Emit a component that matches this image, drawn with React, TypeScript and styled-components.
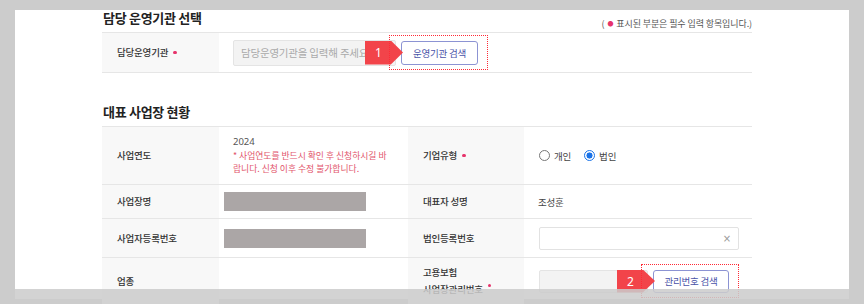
import styled, { createGlobalStyle } from "styled-components";

const GlobalStyle = createGlobalStyle`
  html, body {
    margin: 0;
    background: #cccccc;
    overflow: hidden;
  }
  body {
    font-family: "Noto Sans CJK KR", "Noto Sans", sans-serif;
    color: #333;
  }
`;

const Page = styled.div`
  position: relative;
  height: 304px;
  padding: 15px 15px 0;
  box-sizing: border-box;
  overflow: hidden;
`;

const Panel = styled.div`
  background: #ffffff;
  height: 100%;
  padding: 0 97px 0 87px;
`;

// the translucent strip over the bottom edge of the capture
const Shade = styled.div`
  position: absolute;
  left: 0;
  right: 0;
  bottom: 0;
  height: 15px;
  background: rgba(204, 204, 204, 0.86);
`;

const Header = styled.div`
  margin-top: -5px;
  height: 22px;
  display: flex;
  justify-content: space-between;
  align-items: flex-end;
`;

const Title = styled.h2<{ $top?: number }>`
  margin: ${(p) => p.$top ?? 0}px 0 6px 1px;
  font-size: 13px;
  line-height: 16px;
  font-weight: 700;
  letter-spacing: -0.3px;
  color: #222;
`;

const Notice = styled.p`
  margin: 0 0 2px;
  font-size: 9px;
  line-height: 12px;
  color: #555;
  letter-spacing: -0.1px;

  & > span {
    color: #e6336b;
    font-size: 6px;
    margin: 0 3px;
    vertical-align: 1px;
  }
`;

const Table = styled.div`
  border-top: 1px solid #e6e6e6;
`;

const Row = styled.div<{ $cols: string; $h: number }>`
  display: grid;
  grid-template-columns: ${(p) => p.$cols};
  height: ${(p) => p.$h}px;
  border-bottom: 1px solid #e6e6e6;
`;

const Label = styled.div`
  background: #f8f8f8;
  padding-left: 15px;
  display: flex;
  align-items: center;
  font-size: 9.5px;
  line-height: 17px;
  font-weight: 500;
  letter-spacing: -0.2px;
  color: #333;
`;

const Value = styled.div<{ $pad?: number }>`
  padding: 0 14px 0 ${(p) => p.$pad ?? 14}px;
  display: flex;
  align-items: center;
  font-size: 9.5px;
  color: #444;
  letter-spacing: -0.2px;
`;

const Required = styled.span`
  display: inline-block;
  width: 3.5px;
  height: 3.5px;
  border-radius: 50%;
  background: #e6336b;
  margin-left: 5px;
  vertical-align: 6px;
`;

const InputGroup = styled.div`
  display: flex;
  align-items: center;
  gap: 5px;
`;

const TextInput = styled.div<{ $w: number; $h: number }>`
  width: ${(p) => p.$w}px;
  height: ${(p) => p.$h}px;
  box-sizing: border-box;
  background: #f3f3f3;
  border: 1px solid #e4e4e4;
  border-radius: 2px;
  padding: 0 7px;
  display: flex;
  align-items: center;
  font-size: 10.5px;
  color: #aaa;
  white-space: nowrap;
  overflow: hidden;
`;

const ClearField = styled.div`
  width: 200px;
  height: 23px;
  box-sizing: border-box;
  background: #fff;
  border: 1px solid #e2e2e2;
  border-radius: 2px;
  padding: 0 7px;
  display: flex;
  align-items: center;
  justify-content: flex-end;
  color: #999;
  font-size: 10px;
  font-family: "DejaVu Sans", sans-serif;
`;

const Annotated = styled.div`
  position: relative;

  &::after {
    content: "";
    position: absolute;
    top: -6px;
    left: -12px;
    right: -10px;
    bottom: -5px;
    border: 1px dotted #ff2a36;
    pointer-events: none;
  }
`;

const Marker = styled.span`
  position: absolute;
  right: 100%;
  top: 0;
  bottom: 0;
  width: 38px;
  margin-right: -2px;
  background: #f2444a;
  clip-path: polygon(0 0, 68% 0, 100% 50%, 68% 100%, 0 100%);
  color: #fff;
  font-family: "Noto Sans", sans-serif;
  font-size: 12px;
  display: flex;
  align-items: center;
  padding-left: 10px;
  box-sizing: border-box;
`;

const SearchButton = styled.button<{ $w: number; $h: number }>`
  width: ${(p) => p.$w}px;
  height: ${(p) => p.$h}px;
  background: #fff;
  border: 1px solid #8c93d3;
  border-radius: 3px;
  color: #4a53a8;
  font-family: "Noto Sans CJK KR", sans-serif;
  font-size: 9.5px;
  letter-spacing: -0.2px;
  padding: 0;
`;

const YearBlock = styled.div`
  display: flex;
  flex-direction: column;
  line-height: 13.5px;

  & > b {
    font-weight: 400;
    font-family: "Noto Sans", sans-serif;
    font-size: 9.5px;
    color: #555;
    letter-spacing: 0;
  }
  & > span {
    font-size: 8.8px;
    color: #e2566c;
    letter-spacing: 0;
  }
`;

const RadioGroup = styled.div`
  display: flex;
  align-items: center;
  gap: 13px;
`;

const RadioItem = styled.label`
  display: flex;
  align-items: center;
  gap: 4px;
  font-size: 9.5px;
  color: #444;
`;

const RadioMark = styled.span<{ $on?: boolean }>`
  width: 11px;
  height: 11px;
  box-sizing: border-box;
  border-radius: 50%;
  border: 1px solid ${(p) => (p.$on ? "#1a73e8" : "#777")};
  background: ${(p) => (p.$on ? "radial-gradient(circle, #1a73e8 0 2.8px, #fff 3.3px)" : "#fff")};
`;

const Redacted = styled.div`
  width: 142px;
  height: 19px;
  margin-left: -9px;
  background: #aba6a6;
`;

const Lines = styled.div`
  display: flex;
  flex-direction: column;
`;

const COLS = "117px 189px 116px 1fr";

export default function App() {
  return (
    <Page>
      <GlobalStyle />
      <Panel>
        <Header>
          <Title>담당 운영기관 선택</Title>
          <Notice>
            (<span>●</span>표시된 부분은 필수 입력 항목입니다.)
          </Notice>
        </Header>
        <Table>
          <Row $cols="117px 1fr" $h={39}>
            <Label>
              담당운영기관<Required />
            </Label>
            <Value>
              <InputGroup>
                <TextInput $w={163} $h={26}>
                  담당운영기관을 입력해 주세요
                </TextInput>
                <Annotated>
                  <Marker>1</Marker>
                  <SearchButton $w={77} $h={24}>
                    운영기관 검색
                  </SearchButton>
                </Annotated>
              </InputGroup>
            </Value>
          </Row>
        </Table>

        <Title $top={31}>대표 사업장 현황</Title>
        <Table>
          <Row $cols={COLS} $h={57}>
            <Label>사업연도</Label>
            <Value>
              <YearBlock>
                <b>2024</b>
                <span>* 사업연도를 반드시 확인 후 신청하시길 바랍니다. 신청 이후 수정 불가합니다.</span>
              </YearBlock>
            </Value>
            <Label>
              기업유형<Required />
            </Label>
            <Value $pad={15}>
              <RadioGroup>
                <RadioItem>
                  <RadioMark />
                  개인
                </RadioItem>
                <RadioItem>
                  <RadioMark $on />
                  법인
                </RadioItem>
              </RadioGroup>
            </Value>
          </Row>
          <Row $cols={COLS} $h={33}>
            <Label>사업장명</Label>
            <Value>
              <Redacted />
            </Value>
            <Label>대표자 성명</Label>
            <Value $pad={14}>조성훈</Value>
          </Row>
          <Row $cols={COLS} $h={38}>
            <Label>사업자등록번호</Label>
            <Value>
              <Redacted />
            </Value>
            <Label>법인등록번호</Label>
            <Value $pad={15}>
              <ClearField>×</ClearField>
            </Value>
          </Row>
          <Row $cols={COLS} $h={46}>
            <Label>업종</Label>
            <Value />
            <Label>
              <Lines>
                <span>고용보험</span>
                <span>
                  사업장관리번호
                  <Required />
                </span>
              </Lines>
            </Label>
            <Value $pad={15}>
              <InputGroup>
                <TextInput $w={109} $h={23} />
                <Annotated>
                  <Marker>2</Marker>
                  <SearchButton $w={76} $h={23}>
                    관리번호 검색
                  </SearchButton>
                </Annotated>
              </InputGroup>
            </Value>
          </Row>
        </Table>
      </Panel>
      <Shade />
    </Page>
  );
}
